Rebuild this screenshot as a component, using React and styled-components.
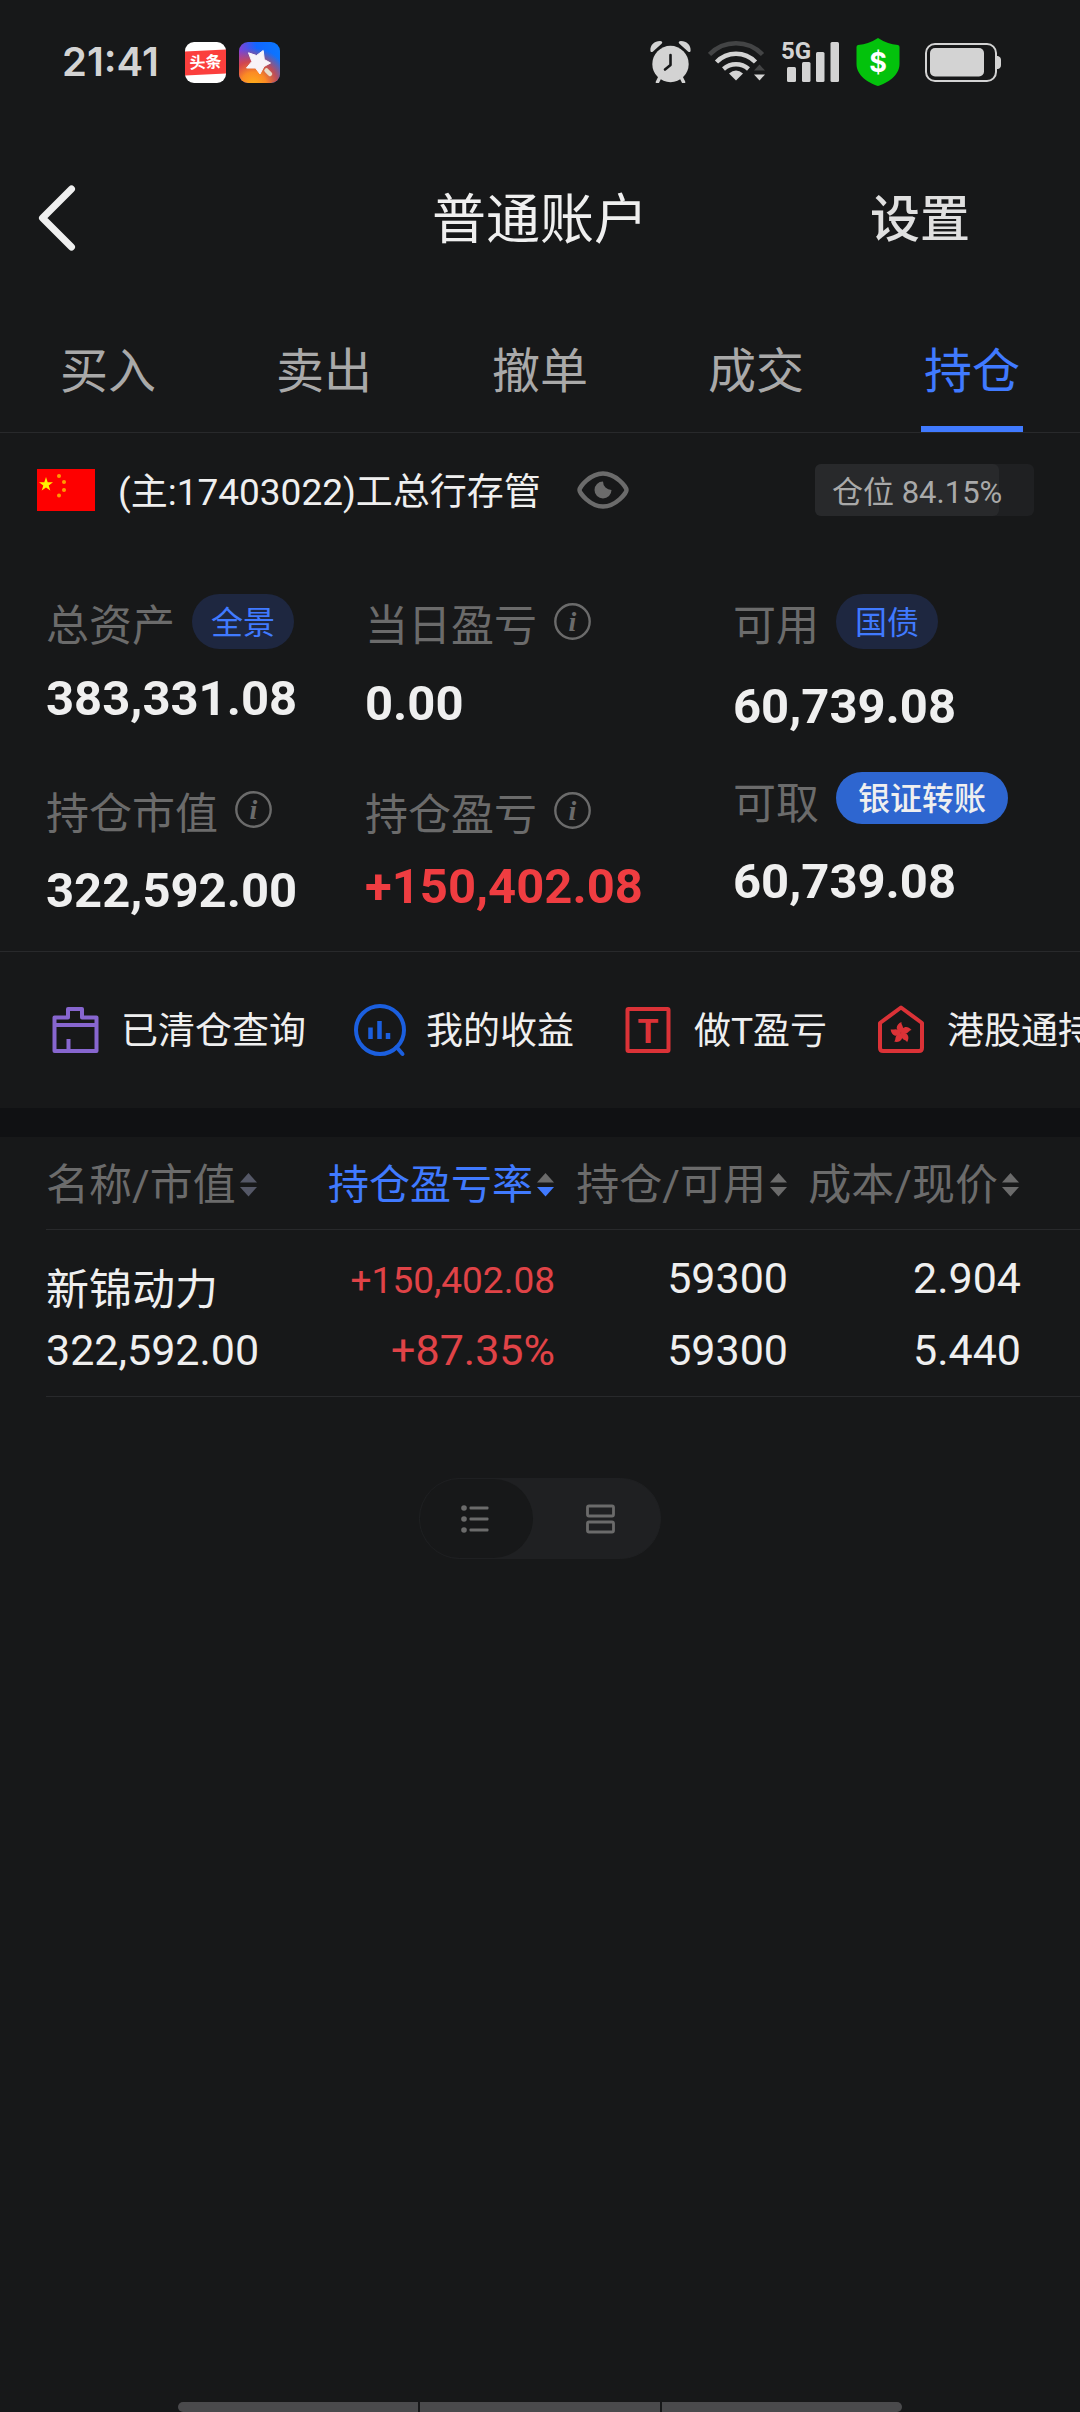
/* eslint-disable react/prop-types */
import React from 'react';
import styled, { createGlobalStyle } from 'styled-components';

const GlobalStyle = createGlobalStyle`
  body {
    margin: 0;
    background: #171819;
  }

  button {
    margin: 0;
    padding: 0;
    border: 0;
    background: none;
    color: inherit;
    font: inherit;
    cursor: pointer;
  }

  svg {
    display: block;
    flex: none;
  }
`;

const Page = styled.div`
  display: flex;
  flex-direction: column;
  min-height: 100vh;
  overflow: hidden;
  background: #171819;
  color: #efefef;
  font-family: Roboto, 'Noto Sans CJK SC', sans-serif;
`;

const StatusBar = styled.div`
  display: flex;
  align-items: center;
  justify-content: space-between;
  height: 124px;
  padding: 0 79px 0 62px;
  color: #d3d3d3;
`;

const StatusGroup = styled.div`
  display: flex;
  align-items: center;
  gap: ${({ $gap }) => $gap}px;
`;

const Clock = styled.time`
  margin-right: 13px;
  font-family: Inter, sans-serif;
  font-size: 40px;
  font-weight: 600;
  line-height: 48px;
`;

const BatterySlot = styled.div`
  margin-left: 9px;
`;

const Header = styled.header`
  display: grid;
  grid-template-columns: 1fr auto 1fr;
  align-items: center;
  height: 188px;
  padding: 0 110px 0 37px;
`;

const BackButton = styled.button`
  justify-self: start;
  margin-right: 73px;
`;

const Title = styled.h1`
  margin: 0 0 0 73px;
  padding-top: 5px;
  font-size: 54px;
  font-weight: 400;
  line-height: 64px;
`;

const SettingsButton = styled.button`
  justify-self: end;
  padding-top: 4px;
  color: #e0e0e0;
  font-size: 50px;
  font-weight: 500;
  line-height: 64px;
`;

const Tabs = styled.nav`
  display: grid;
  grid-template-columns: repeat(5, 1fr);
  height: 120px;
  border-bottom: 1px solid #28292b;
`;

const Tab = styled.button`
  position: relative;
  color: ${({ $active }) => ($active ? '#407aff' : '#a9a9a9')};
  font-size: 48px;
  line-height: 60px;

  &::after {
    content: '';
    display: ${({ $active }) => ($active ? 'block' : 'none')};
    position: absolute;
    bottom: 0;
    left: 50%;
    width: 102px;
    height: 6px;
    margin-left: -51px;
    background: #407aff;
  }
`;

const AccountRow = styled.section`
  display: flex;
  align-items: center;
  height: 114px;
  padding: 0 46px 0 37px;
`;

const AccountName = styled.span`
  margin: 0 36px 0 23px;
  padding-top: 5px;
  font-size: 37px;
  line-height: 56px;
  white-space: nowrap;
`;

const Position = styled.div`
  position: relative;
  width: 219px;
  height: 52px;
  margin-left: auto;
  border-radius: 6px;
  background: #1f2022;
`;

const PositionFill = styled.div`
  height: 100%;
  border-radius: 6px;
  background: #28292b;
`;

const PositionText = styled.span`
  position: absolute;
  inset: 0;
  padding: 0 17px;
  color: #a9a9a9;
  font-size: 31px;
  line-height: 58px;
  white-space: nowrap;
`;

const Summary = styled.section`
  display: grid;
  grid-template-columns: 319fr 368fr 347fr;
  padding: 47px 0 32px 46px;
  border-bottom: 1px solid #28292b;
`;

const SummaryColumn = styled.div`
  display: flex;
  flex-direction: column;
  gap: ${({ $gap }) => $gap}px;
`;

const StatLabel = styled.div`
  display: flex;
  align-items: center;
  gap: 17px;
  height: 55px;
  margin-bottom: ${({ $gap }) => $gap}px;
  color: #6b6b6b;
`;

const StatName = styled.span`
  align-self: flex-end;
  font-size: 43px;
  line-height: 46px;
  white-space: nowrap;
`;

const StatValue = styled.div`
  color: ${({ $up }) => ($up ? '#ef3d41' : '#efefef')};
  font-size: 49px;
  font-weight: 700;
  line-height: 56px;
`;

const Pill = styled.button`
  align-self: ${({ $solid }) => ($solid ? 'flex-start' : 'center')};
  height: ${({ $solid }) => ($solid ? 52 : 55)}px;
  padding: 2px ${({ $solid }) => ($solid ? 22 : 19)}px 0;
  border-radius: 28px;
  background: ${({ $solid }) => ($solid ? '#2e66d0' : '#1e2740')};
  color: ${({ $solid }) => ($solid ? '#efefef' : '#407aff')};
  font-size: 32px;
  font-weight: ${({ $solid }) => ($solid ? 500 : 400)};
  line-height: 48px;
  white-space: nowrap;
`;

const Shortcuts = styled.nav`
  display: flex;
  align-items: center;
  gap: 46px;
  height: 156px;
  padding-left: 47px;
  overflow: hidden;
`;

const Shortcut = styled.button`
  display: flex;
  flex: none;
  align-items: center;
  gap: 18px;
  font-size: 37px;
  line-height: 56px;
  white-space: nowrap;
`;

const ShortcutLabel = styled.span`
  padding-top: 4px;
`;

const Band = styled.div`
  height: 29px;
  background: #101113;
`;

const TableWrap = styled.div`
  padding-left: 46px;
`;

const Holdings = styled.table`
  width: 100%;
  border-collapse: separate;
  border-spacing: 0;
  table-layout: fixed;
`;

const HeadCell = styled.th`
  box-sizing: border-box;
  width: ${({ $width }) => $width}px;
  height: 93px;
  padding: 4px ${({ $last }) => ($last ? 61 : 1)}px 0 0;
  border-bottom: 1px solid #28292b;
  text-align: ${({ $left }) => ($left ? 'left' : 'right')};
  font-weight: 400;
`;

const SortButton = styled.button`
  display: inline-flex;
  align-items: center;
  gap: 4px;
  color: ${({ $active }) => ($active ? '#407aff' : '#6b6b6b')};
  font-size: ${({ $active }) => ($active ? 41 : 43)}px;
  line-height: 60px;
  vertical-align: middle;
  white-space: nowrap;
`;

const Cell = styled.td`
  padding: 18px ${({ $last }) => ($last ? 59 : 0)}px 16px 0;
  border-bottom: 1px solid #28292b;
  color: ${({ $up }) => ($up ? '#e04347' : '#efefef')};
  font-size: 43px;
  line-height: 60px;
  text-align: ${({ $left }) => ($left ? 'left' : 'right')};
  vertical-align: bottom;
`;

const FirstLine = styled.div`
  margin-bottom: ${({ $gap }) => $gap}px;
  font-size: ${({ $small }) => ($small ? 37 : 43)}px;
`;

const ViewToggle = styled.div`
  display: flex;
  align-self: center;
  width: 240px;
  height: 79px;
  margin-top: 81px;
  border: 1px solid #1f2022;
  border-radius: 41px;
  background: #1f2022;
`;

const ViewButton = styled.button`
  display: flex;
  flex: ${({ $active }) => ($active ? '0 0 113px' : '1')};
  align-items: center;
  justify-content: center;
  padding: ${({ $active }) => ($active ? '0 4px 0 0' : '0 0 0 8px')};
  border-radius: 40px;
  background: ${({ $active }) => ($active ? '#171819' : 'transparent')};
`;

const GestureBar = styled.div`
  display: grid;
  grid-template-columns: repeat(3, 1fr);
  gap: 2px;
  align-self: center;
  width: 67%;
  height: 10px;
  margin-top: auto;
  border-radius: 5px;
  overflow: hidden;
`;

const GestureSegment = styled.div`
  background: #4a4a4c;
`;

function ToutiaoIcon() {
  return (
    <svg width="41" height="41" viewBox="0 0 41 41">
      <rect width="41" height="41" rx="9" fill="#fff" />
      <path d="M0 9.5 41 7.5V31.5L0 33.5Z" fill="#fb3f3d" />
      <text x="20.5" y="26" textAnchor="middle" fill="#fff" fontFamily="'Noto Sans CJK SC', sans-serif" fontWeight="700" fontSize="16" transform="rotate(-3 20 20)">头条</text>
    </svg>
  );
}

function StarAppIcon() {
  return (
    <svg width="41" height="41" viewBox="0 0 41 41">
      <defs>
        <linearGradient id="appBlue" x1="0" y1="0.3" x2="1" y2="0.1">
          <stop offset="0" stopColor="#8a3fd0" />
          <stop offset="0.45" stopColor="#1266ff" />
          <stop offset="1" stopColor="#0a78ff" />
        </linearGradient>
        <radialGradient id="appWarm" cx="0.35" cy="1.05" r="0.9">
          <stop offset="0" stopColor="#ffb01a" />
          <stop offset="0.35" stopColor="#fb8a24" />
          <stop offset="0.65" stopColor="#e8452f" stopOpacity="0.8" />
          <stop offset="1" stopColor="#e8452f" stopOpacity="0" />
        </radialGradient>
      </defs>
      <rect width="41" height="41" rx="9" fill="url(#appBlue)" />
      <rect width="41" height="41" rx="9" fill="url(#appWarm)" />
      <path d="M24.2 8.5 25.3 17.5 31.5 21 25 24.5 21 32 16.5 26 7.5 26 12.8 19.5 9.5 10.8 17.5 13.5Z" fill="#f8f3f8" stroke="#f8f3f8" strokeLinejoin="round" />
      <path d="M27.5 28.5 31 32" stroke="#e6dcc8" strokeWidth="4.5" strokeLinecap="round" />
    </svg>
  );
}

function AlarmIcon() {
  return (
    <svg width="42" height="42" viewBox="0 0 42 42" fill="#d3d3d3">
      <path d="M.4 9.5C0 4 4.5 0 10 0c2.200 0 3 1.500 1.600 2.800L3 10.500C1.500 11.600.5 11 .4 9.500Z" />
      <path d="M40.600 9.500C41 4 36.500 0 31 0c-2.200 0-3 1.500-1.600 2.800L38 10.500c1.500 1.100 2.500.5 2.600-1Z" />
      <circle cx="20.5" cy="23" r="18.2" />
      <path d="M10 36 7.500 41M31 36 33.500 41" stroke="#d3d3d3" strokeWidth="3.5" strokeLinecap="round" />
      <path d="M20.500 14V24L15 28.500" fill="none" stroke="#171819" strokeWidth="2.6" strokeLinecap="round" strokeLinejoin="round" />
    </svg>
  );
}

function WifiIcon() {
  return (
    <svg width="58" height="42" viewBox="0 0 58 42" fill="none" stroke="#d3d3d3" strokeWidth="4.5">
      <path d="M1.500 13.500A37 37 0 0 1 54.500 13.500" stroke="#434445" />
      <path d="M8.500 21A27 27 0 0 1 47.500 21" />
      <path d="M15.500 28A19 19 0 0 1 40.500 28" />
      <path d="M21 32.500Q28 26.500 35 32.500L28 39.500Z" fill="#d3d3d3" stroke="none" />
      <path d="M46 29.500 51.500 23.500 57 29.500Z" fill="#434445" stroke="none" />
      <path d="M46 33.500H57L51.500 39.500Z" fill="#d3d3d3" stroke="none" />
    </svg>
  );
}

const SignalSvg = styled.svg`
  overflow: visible;
`;

function SignalIcon() {
  return (
    <SignalSvg width="58" height="42" viewBox="0 0 58 42" fill="#d3d3d3">
      <text x="-1" y="18" fontFamily="Roboto, sans-serif" fontWeight="700" fontSize="24">5G</text>
      <rect x="5" y="26" width="9" height="15" rx="1.5" />
      <rect x="20" y="21" width="8.5" height="20" rx="1.5" />
      <rect x="34" y="11" width="8.5" height="30" rx="1.5" />
      <rect x="48.5" y="1" width="8.5" height="40" rx="1.5" />
    </SignalSvg>
  );
}

function ShieldIcon() {
  return (
    <svg width="44" height="48" viewBox="0 0 44 48">
      <path d="M22 0Q31 6 42 7Q43.500 7.500 43.500 9V26C43.500 38 31 45 22 48C13 45 .5 38 .5 26V9Q.5 7.500 2 7Q13 6 22 0Z" fill="#03c20c" />
      <text x="22" y="34" textAnchor="middle" fill="#fff" fontFamily="Inter, sans-serif" fontWeight="700" fontSize="27">$</text>
    </svg>
  );
}

function BatteryIcon() {
  return (
    <svg width="76" height="39" viewBox="0 0 76 39">
      <rect x="1" y="1" width="70" height="37" rx="9" fill="none" stroke="#d3d3d3" strokeWidth="2" />
      <rect x="5" y="5" width="54" height="28.5" rx="5" fill="#d3d3d3" />
      <path d="M72 13H73Q76 14 76 17V22Q76 25 73 26H72Z" fill="#d3d3d3" />
    </svg>
  );
}

function BackIcon() {
  return (
    <svg width="40" height="68" viewBox="0 0 40 68" fill="none" stroke="#efefef" strokeWidth="7" strokeLinecap="round" strokeLinejoin="round">
      <path d="M34.500 5 5.500 34 34.500 63" />
    </svg>
  );
}

function Flag() {
  return (
    <svg width="58" height="42" viewBox="0 0 58 42">
      <rect width="58" height="42" fill="#fe0000" />
      <path d="M9 8 10.700 13.200H16L11.700 16.400 13.300 21.600 9 18.400 4.700 21.600 6.300 16.400 2 13.200H7.300Z" fill="#fff100" />
      <g fill="#ff9a00">
        <circle cx="22" cy="7" r="2" />
        <circle cx="27" cy="13" r="2" />
        <circle cx="27" cy="21" r="2" />
        <circle cx="22" cy="26.5" r="2" />
      </g>
    </svg>
  );
}

function EyeIcon() {
  return (
    <svg width="52" height="38" viewBox="0 0 52 38">
      <path d="M2.500 19C2.500 16 13 2.500 26 2.500S49.500 16 49.500 19 39 35.500 26 35.500 2.500 22 2.500 19Z" fill="none" stroke="#6b6b6b" strokeWidth="4.5" />
      <path d="M26 10.500A8.500 8.500 0 1 0 34.500 19 8.500 8.500 0 0 1 26 10.500Z" fill="#6b6b6b" />
    </svg>
  );
}

function InfoIcon() {
  return (
    <svg width="37" height="37" viewBox="0 0 37 37">
      <circle cx="18.5" cy="18.5" r="17.2" fill="none" stroke="#6b6b6b" strokeWidth="2.4" />
      <text x="18.5" y="28" textAnchor="middle" fill="#6b6b6b" fontFamily="'Liberation Serif', serif" fontStyle="italic" fontWeight="700" fontSize="28">i</text>
    </svg>
  );
}

function ClearedIcon() {
  return (
    <svg width="56" height="56" viewBox="0 0 56 56" fill="none" stroke="#8766cf" strokeWidth="4" strokeLinejoin="round">
      <path d="M7.500 15.500H21V7H35V15.500H49.500V49H7.500ZM7.500 23H49.500M21.500 37V48" />
    </svg>
  );
}

function ProfitIcon() {
  return (
    <svg width="56" height="56" viewBox="0 0 56 56" fill="none" stroke="#1b5fdf" strokeWidth="4">
      <circle cx="28" cy="28" r="24" />
      <path d="M44.500 45 50.500 52" strokeLinecap="round" />
      <path d="M18.500 25.500V37M27.500 19V37M36 31V37" strokeWidth="4.5" />
    </svg>
  );
}

function DayTradeIcon() {
  return (
    <svg width="56" height="56" viewBox="0 0 56 56">
      <rect x="7.5" y="7" width="41" height="42" rx="1" fill="none" stroke="#db3237" strokeWidth="4" />
      <text x="28" y="41" textAnchor="middle" fill="#db3237" fontFamily="Roboto, sans-serif" fontWeight="700" fontSize="34">T</text>
    </svg>
  );
}

function HongKongIcon() {
  return (
    <svg width="56" height="56" viewBox="0 0 56 56">
      <path d="M7 21 28 5.500 49 21V46Q49 49 46 49H10Q7 49 7 46Z" fill="none" stroke="#db3237" strokeWidth="4" strokeLinejoin="round" />
      {[0, 72, 144, 216, 288].map((angle) => (
        <path key={angle} d="M28 31C22 28.500 22.500 22.500 28.500 20 27.500 23 33 25 28 31Z" fill="#db3237" transform={`rotate(${angle} 28 31)`} />
      ))}
    </svg>
  );
}

function SortIcon({ up = '#6b6b6b', down = '#6b6b6b' }) {
  return (
    <svg width="17" height="24" viewBox="0 0 17 24">
      <path d="M8.500 0 17 9.500H0Z" fill={up} />
      <path d="M0 14H17L8.500 23.500Z" fill={down} />
    </svg>
  );
}

function ListIcon() {
  return (
    <svg width="28" height="30" viewBox="0 0 28 30" fill="#6b6b6b">
      {[4, 15, 26].map((y) => (
        <g key={y}>
          <circle cx="3" cy={y} r="2.8" />
          <rect x="8.5" y={y - 1.5} width="19" height="3" rx="1" />
        </g>
      ))}
    </svg>
  );
}

function CardsIcon() {
  return (
    <svg width="29" height="30" viewBox="0 0 29 30" fill="none" stroke="#6b6b6b" strokeWidth="2.8">
      <rect x="1.5" y="2" width="26" height="10" rx="1.5" />
      <rect x="1.5" y="18" width="26" height="10" rx="1.5" />
    </svg>
  );
}

const tabs = ['买入', '卖出', '撤单', '成交', '持仓'];

const summary = [
  {
    gap: 55,
    stats: [
      { name: '总资产', pill: '全景', value: '383,331.08', gap: 22 },
      { name: '持仓市值', info: true, value: '322,592.00', gap: 26 },
    ],
  },
  {
    gap: 51,
    stats: [
      { name: '当日盈亏', info: true, value: '0.00', gap: 27 },
      { name: '持仓盈亏', info: true, value: '+150,402.08', up: true, gap: 21 },
    ],
  },
  {
    gap: 37,
    stats: [
      { name: '可用', pill: '国债', value: '60,739.08', gap: 30 },
      { name: '可取', pill: '银证转账', solid: true, value: '60,739.08', gap: 27 },
    ],
  },
];

const shortcuts = [
  { label: '已清仓查询', Icon: ClearedIcon },
  { label: '我的收益', Icon: ProfitIcon },
  { label: '做T盈亏', Icon: DayTradeIcon },
  { label: '港股通持仓', Icon: HongKongIcon },
];

const holdings = [
  {
    name: '新锦动力',
    marketValue: '322,592.00',
    profit: '+150,402.08',
    rate: '+87.35%',
    amount: '59300',
    available: '59300',
    cost: '2.904',
    price: '5.440',
  },
];

function Stat({ stat }) {
  return (
    <div>
      <StatLabel $gap={stat.gap}>
        <StatName>{stat.name}</StatName>
        {stat.pill && <Pill type="button" $solid={stat.solid}>{stat.pill}</Pill>}
        {stat.info && (
          <button type="button" aria-label={stat.name}>
            <InfoIcon />
          </button>
        )}
      </StatLabel>
      <StatValue $up={stat.up}>{stat.value}</StatValue>
    </div>
  );
}

function HoldingsTable() {
  return (
    <TableWrap>
      <Holdings>
        <thead>
          <tr>
            <HeadCell $width={274} $left>
              <SortButton type="button">
                名称/市值
                <SortIcon up="#555867" down="#555867" />
              </SortButton>
            </HeadCell>
            <HeadCell $width={235}>
              <SortButton type="button" $active>
                持仓盈亏率
                <SortIcon down="#407aff" />
              </SortButton>
            </HeadCell>
            <HeadCell $width={233}>
              <SortButton type="button">
                持仓/可用
                <SortIcon />
              </SortButton>
            </HeadCell>
            <HeadCell $width={292} $last>
              <SortButton type="button">
                成本/现价
                <SortIcon />
              </SortButton>
            </HeadCell>
          </tr>
        </thead>
        <tbody>
          {holdings.map((item) => (
            <tr key={item.name}>
              <Cell $left>
                <FirstLine $gap={0}>{item.name}</FirstLine>
                {item.marketValue}
              </Cell>
              <Cell $up>
                <FirstLine $gap={9} $small>{item.profit}</FirstLine>
                {item.rate}
              </Cell>
              <Cell>
                <FirstLine $gap={12}>{item.amount}</FirstLine>
                {item.available}
              </Cell>
              <Cell $last>
                <FirstLine $gap={12}>{item.cost}</FirstLine>
                {item.price}
              </Cell>
            </tr>
          ))}
        </tbody>
      </Holdings>
    </TableWrap>
  );
}

function App() {
  const ratio = 84.15;

  return (
    <Page>
      <GlobalStyle />
      <StatusBar>
        <StatusGroup $gap={13}>
          <Clock>21:41</Clock>
          <ToutiaoIcon />
          <StarAppIcon />
        </StatusGroup>
        <StatusGroup $gap={16}>
          <AlarmIcon />
          <WifiIcon />
          <SignalIcon />
          <ShieldIcon />
          <BatterySlot>
            <BatteryIcon />
          </BatterySlot>
        </StatusGroup>
      </StatusBar>

      <Header>
        <BackButton type="button" aria-label="返回">
          <BackIcon />
        </BackButton>
        <Title>普通账户</Title>
        <SettingsButton type="button">设置</SettingsButton>
      </Header>

      <Tabs>
        {tabs.map((tab) => (
          <Tab key={tab} type="button" $active={tab === '持仓'}>{tab}</Tab>
        ))}
      </Tabs>

      <AccountRow>
        <Flag />
        <AccountName>(主:17403022)工总行存管</AccountName>
        <button type="button" aria-label="隐藏金额">
          <EyeIcon />
        </button>
        <Position>
          <PositionFill style={{ width: `${ratio}%` }} />
          <PositionText>{`仓位 ${ratio}%`}</PositionText>
        </Position>
      </AccountRow>

      <Summary>
        {summary.map((column) => (
          <SummaryColumn key={column.gap} $gap={column.gap}>
            {column.stats.map((stat) => (
              <Stat key={stat.name} stat={stat} />
            ))}
          </SummaryColumn>
        ))}
      </Summary>

      <Shortcuts>
        {shortcuts.map(({ label, Icon }) => (
          <Shortcut key={label} type="button">
            <Icon />
            <ShortcutLabel>{label}</ShortcutLabel>
          </Shortcut>
        ))}
      </Shortcuts>
      <Band />

      <HoldingsTable />

      <ViewToggle>
        <ViewButton type="button" $active aria-label="列表">
          <ListIcon />
        </ViewButton>
        <ViewButton type="button" aria-label="卡片">
          <CardsIcon />
        </ViewButton>
      </ViewToggle>

      <GestureBar>
        <GestureSegment />
        <GestureSegment />
        <GestureSegment />
      </GestureBar>
    </Page>
  );
}

export default App;
